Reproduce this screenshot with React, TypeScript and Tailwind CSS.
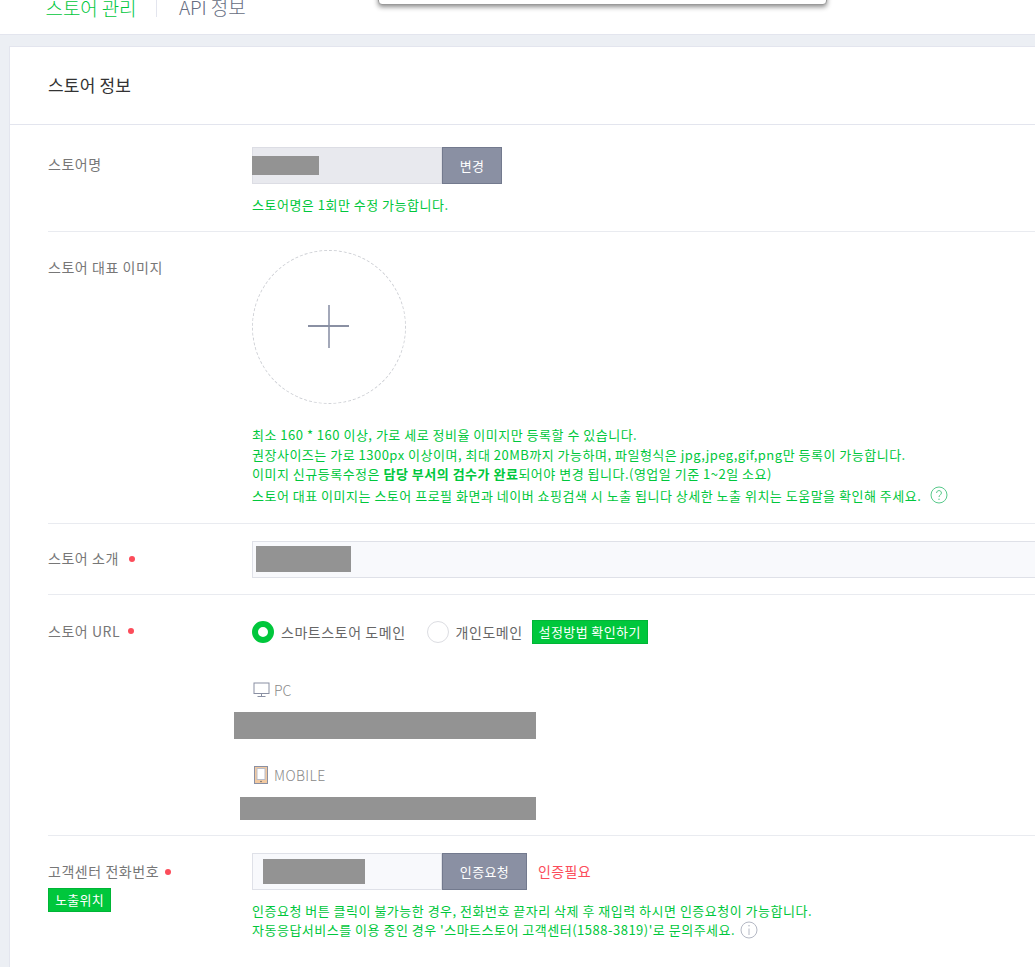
const FONT = "font-['Noto_Sans_CJK_KR','Noto_Sans',sans-serif]";

function Dot() {
  return <span className="inline-block w-[6px] h-[6px] rounded-full bg-[#fc4c5a]" />;
}

function Redact({ className }: { className: string }) {
  return <div className={"bg-[#939393] " + className} />;
}

const LABEL = "w-[204px] shrink-0 text-[#777] text-[14px] tracking-[0.55px]";
const HELP = "text-[13px] tracking-[0.5px] text-[#00c73c] whitespace-nowrap";

export default function App() {
  return (
    <div className={"relative w-[1035px] h-[967px] overflow-hidden bg-[#eceff4] text-[13px] " + FONT}>
      <div className="absolute left-[378px] top-[-20px] w-[449px] h-[25px] bg-white rounded-[4px] border border-[#9a9a9a] shadow-[0_2px_5px_rgba(0,0,0,0.45)]" />

      <div className="h-[35px] bg-white border-b border-[#e3e5ee] pl-[47px] flex items-end overflow-hidden">
        <div className="h-[35px] w-[88px] border-b border-[#00c73c] text-[#00c73c] text-[19px] tracking-[-0.1px] font-light leading-[16px] flex items-start justify-center whitespace-nowrap -mb-px">
          스토어 관리
        </div>
        <div className="w-px h-[18px] bg-[#e3e5ee] ml-[21px] mb-[17px]" />
        <div className="h-[35px] ml-[22px] text-[#666d82] text-[19px] tracking-[-0.1px] font-light leading-[16px] whitespace-nowrap">API 정보</div>
      </div>

      <div className="mt-[11px] ml-[9px] w-[1040px] bg-white border-l border-t border-[#e3e5ee] h-[930px]">
        <div className="h-[78px] border-b border-[#e3e5ee] pl-[38px] flex items-center text-[17px] tracking-[0.2px] text-[#333] pb-[2px]">스토어 정보</div>

        <div className="pl-[38px]">
          <div className="h-[107px] border-b border-[#e9ebf0] flex pt-[22px]">
            <div className={LABEL + " leading-[37px] -mt-[1px]"}>스토어명</div>
            <div>
              <div className="flex h-[37px]">
                <div className="w-[190px] bg-[#e8e9ee] border border-[#dcdde4] flex items-center">
                  <Redact className="w-[67px] h-[19px] -ml-px" />
                </div>
                <button className="w-[60px] bg-[#8a90a3] border border-[#737a8e] text-white tracking-[0.4px]">변경</button>
              </div>
              <p className={HELP + " mt-[11px] leading-[19px]"}>스토어명은 1회만 수정 가능합니다.</p>
            </div>
          </div>

          <div className="h-[292px] border-b border-[#e9ebf0] flex pt-[18px]">
            <div className={LABEL + " leading-[37px] -mt-[1px]"}>스토어 대표 이미지</div>
            <div>
              <div className="w-[154px] h-[154px] rounded-full border border-dashed border-[#cfd1d6] flex items-center justify-center">
                <svg width="42" height="44" viewBox="0 0 42 44" fill="none">
                  <path d="M21 0V43" stroke="#a3a8b9" strokeWidth="2" />
                  <path d="M0 21H41" stroke="#8a90a3" strokeWidth="2" />
                </svg>
              </div>
              <div className={HELP + " mt-[21px] leading-[19.5px]"}>
                <p>최소 160 * 160 이상, 가로 세로 정비율 이미지만 등록할 수 있습니다.</p>
                <p>권장사이즈는 가로 1300px 이상이며, 최대 20MB까지 가능하며, 파일형식은 jpg,jpeg,gif,png만 등록이 가능합니다.</p>
                <p>이미지 신규등록수정은 <b className="font-bold">담당 부서의 검수가 완료</b>되어야 변경 됩니다.(영업일 기준 1~2일 소요)</p>
                <p className="flex items-center mt-[2px]">
                  스토어 대표 이미지는 스토어 프로필 화면과 네이버 쇼핑검색 시 노출 됩니다 상세한 노출 위치는 도움말을 확인해 주세요.
                  <svg className="ml-[9px]" width="18" height="18" viewBox="0 0 18 18" fill="none">
                    <circle cx="9" cy="9" r="8" stroke="#57c98a" />
                    <path d="M6.6 7c0-1.5 1-2.4 2.4-2.4S11.4 5.5 11.4 7c0 1.8-2.4 2-2.4 4" stroke="#57c98a" />
                    <circle cx="9" cy="13.2" r="0.7" fill="#57c98a" />
                  </svg>
                </p>
              </div>
            </div>
          </div>

          <div className="h-[71px] border-b border-[#e9ebf0] flex pt-[17px]">
            <div className={LABEL + " leading-[37px] flex items-center gap-[10px] h-[37px] -mt-[1px]"}>스토어 소개 <Dot /></div>
            <div className="w-[800px] h-[37px] bg-[#f8f9fc] border border-[#dfe1e8] flex items-center pl-[3px] pb-[2px]">
              <Redact className="w-[95px] h-[26px]" />
            </div>
          </div>

          <div className="h-[241px] border-b border-[#e9ebf0] flex pt-[25px]">
            <div className={LABEL + " h-[24px] flex items-center gap-[8px] -mt-[1px]"}>스토어 URL <Dot /></div>
            <div>
              <div className="flex items-center h-[24px] text-[#666] text-[14px] tracking-[0.55px] whitespace-nowrap">
                <span className="w-[22px] h-[22px] shrink-0 rounded-full border-[6px] border-[#00c73c] bg-white" />
                <span className="ml-[7px]">스마트스토어 도메인</span>
                <span className="ml-[21px] w-[22px] h-[22px] shrink-0 rounded-full border border-[#dcdde2] bg-white" />
                <span className="ml-[7px]">개인도메인</span>
                <button className="ml-[9px] w-[116px] h-[24px] shrink-0 bg-[#00c73c] border border-[#00b536] text-white text-[13px] tracking-[0.4px]">설정방법 확인하기</button>
              </div>

              <div className="mt-[37px] h-[18px] flex items-center text-[#888] pl-px">
                <svg width="17" height="16" viewBox="0 0 17 16" fill="none">
                  <rect x="1" y="1" width="15" height="10.5" stroke="#8a90a3" />
                  <path d="M8.5 11.5V14M4.5 14.5H12.5" stroke="#8a90a3" />
                </svg>
                <span className="ml-[4px] font-light text-[14px]">PC</span>
              </div>
              <Redact className="mt-[13px] -ml-[18px] w-[302px] h-[27px]" />

              <div className="mt-[27px] h-[18px] flex items-center text-[#888] pl-[2px]">
                <svg width="14" height="18" viewBox="0 0 14 18" fill="none">
                  <rect x="0.5" y="0.5" width="13" height="17" fill="#f2c9a0" stroke="#8a90a3" />
                  <rect x="3" y="2.5" width="8" height="11" fill="#fff" stroke="#b9bdca" />
                  <circle cx="7" cy="15.5" r="0.8" fill="#666" />
                </svg>
                <span className="ml-[6px] font-light text-[14px] tracking-[0.4px]">MOBILE</span>
              </div>
              <Redact className="mt-[13px] -ml-[12px] w-[296px] h-[23px]" />
            </div>
          </div>

          <div className="flex pt-[17px]">
            <div className={LABEL}>
              <div className="h-[37px] flex items-center gap-[6px] whitespace-nowrap">고객센터 전화번호 <Dot /></div>
              <div className="w-[63px] h-[24px] mt-[-2px] bg-[#00c73c] border border-[#00b536] text-white text-[13px] tracking-[0.2px] flex items-center justify-center whitespace-nowrap">노출위치</div>
            </div>
            <div>
              <div className="flex h-[37px] items-center">
                <div className="w-[190px] h-[37px] bg-[#f8f9fc] border border-[#dfe1e8] flex items-center pl-[10px]">
                  <Redact className="w-[102px] h-[25px]" />
                </div>
                <button className="w-[85px] h-[37px] bg-[#8a90a3] border border-[#737a8e] text-white tracking-[0.4px]">인증요청</button>
                <span className="ml-[11px] text-[#fc4c5a] text-[14px] tracking-[0.4px]">인증필요</span>
              </div>
              <div className={HELP + " mt-[11px] leading-[19px]"}>
                <p>인증요청 버튼 클릭이 불가능한 경우, 전화번호 끝자리 삭제 후 재입력 하시면 인증요청이 가능합니다.</p>
                <p className="flex items-center">
                  자동응답서비스를 이용 중인 경우 '스마트스토어 고객센터(1588-3819)'로 문의주세요.
                  <svg className="ml-[5px]" width="18" height="18" viewBox="0 0 18 18" fill="none">
                    <circle cx="9" cy="9" r="8" stroke="#b4b8c4" />
                    <path d="M9 7.5V14" stroke="#b4b8c4" />
                    <circle cx="9" cy="4.8" r="0.8" fill="#b4b8c4" />
                  </svg>
                </p>
              </div>
            </div>
          </div>
        </div>
      </div>
    </div>
  );
}
